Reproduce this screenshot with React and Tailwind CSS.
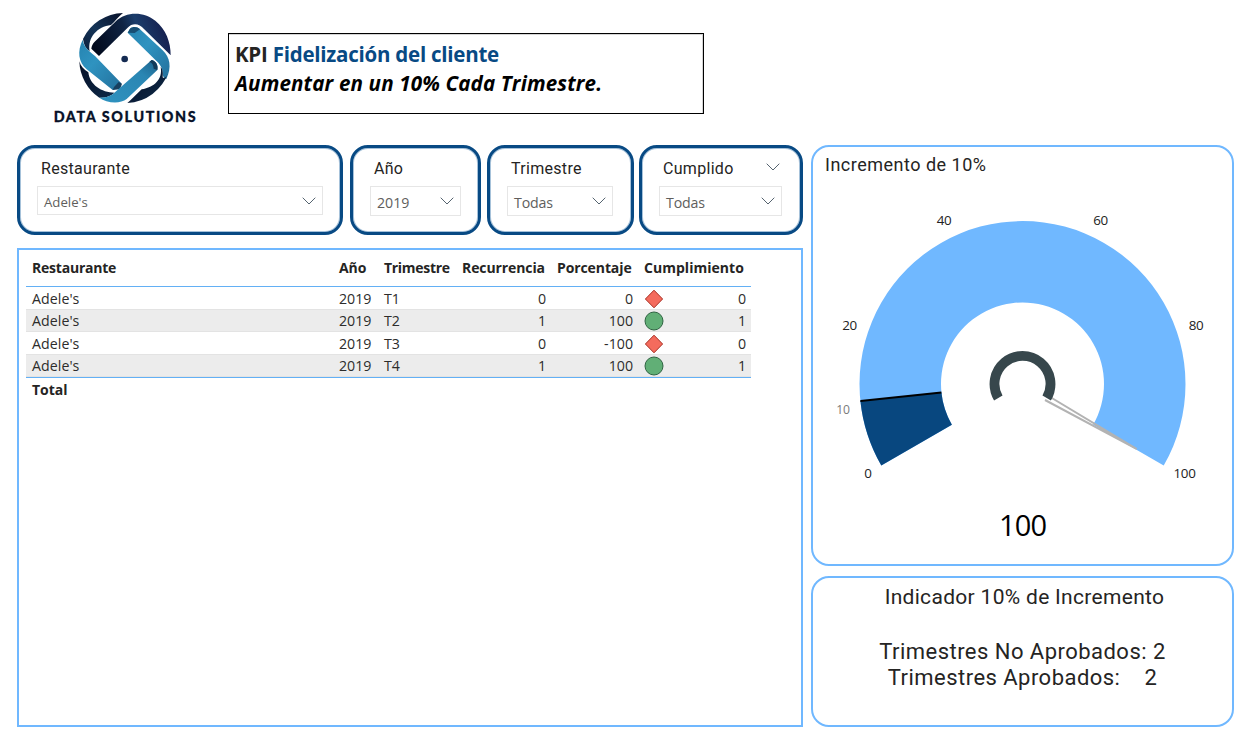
import React from "react";

const SEGOE = "font-['Open_Sans','Noto_Sans',sans-serif]";
const DIN = "font-['Roboto','Noto_Sans',sans-serif]";

function Chevron({ className = "" }) {
  return (
    <svg viewBox="0 0 14 8" fill="none" className={`h-2 w-3.5 shrink-0 ${className}`}>
      <path d="M0.7 0.7 7 7 13.3 0.7" stroke="#55636f" strokeWidth="1" />
    </svg>
  );
}

function Logo() {
  return (
    <svg viewBox="0 0 540 405" className="h-[135px] w-[180px] shrink-0">
      <defs>
        <linearGradient id="navy" x1="0" y1="1" x2="1" y2="0">
          <stop offset="0" stopColor="#0b1f3c" />
          <stop offset="0.45" stopColor="#153457" />
          <stop offset="1" stopColor="#071028" />
        </linearGradient>
        <linearGradient id="ink" x1="0" y1="0" x2="1" y2="1">
          <stop offset="0" stopColor="#050e24" />
          <stop offset="1" stopColor="#0e2b4a" />
        </linearGradient>
        <linearGradient id="navyTop" x1="0" y1="0.6" x2="1" y2="0.4">
          <stop offset="0" stopColor="#020a1c" />
          <stop offset="0.45" stopColor="#0f2444" />
          <stop offset="0.62" stopColor="#1b3d6b" />
          <stop offset="1" stopColor="#151b4a" />
        </linearGradient>
        <linearGradient id="sky" x1="0" y1="0" x2="1" y2="1">
          <stop offset="0" stopColor="#2583b0" />
          <stop offset="0.4" stopColor="#2f93c0" />
          <stop offset="1" stopColor="#23709c" />
        </linearGradient>
        <linearGradient id="skyUp" x1="0" y1="1" x2="1" y2="0">
          <stop offset="0" stopColor="#2f93c0" />
          <stop offset="0.7" stopColor="#2a86b3" />
          <stop offset="1" stopColor="#1c6089" />
        </linearGradient>
      </defs>
      <path d="M249 39A137 137 0 0 0 129 117C131 134 138 147 149 154C142 112 172 80 213 75C226 63 236 50 249 39Z" fill="url(#navy)" />
      <path d="M177 168L154 146C155 137 158 131 164 125L226 65C258 33 312 34 346 62C378 88 392 126 392 166L312 87C298 70 277 68 263 83Z" fill="url(#navyTop)" />
      <path d="M263 98L270 86C280 79 291 80 300 88L368 151C390 171 396 202 379 237C373 236 369 231 368 221C368 204 361 194 347 181Z" fill="url(#sky)" />
      <path d="M263 98L270 86C280 79 291 80 300 88L284 99Z" fill="#174e73" />
      <path d="M118 184A137 137 0 0 0 178 293C193 295 211 289 224 278C184 278 149 254 145 217C131 208 122 199 118 184Z" fill="url(#ink)" />
      <path d="M128 119C111 155 115 185 140 208L218 270L234 263L244 250L165 168C148 153 131 142 128 119Z" fill="url(#sky)" />
      <path d="M218 270L222 261L236 246L246 251L240 268Z" fill="#173f5f" />
      <path d="M178 293C200 294 216 287 229 273L335 180C349 184 355 196 352 210L260 297C240 313 199 309 178 293Z" fill="url(#skyUp)" />
      <path d="M335 180C349 184 355 196 352 210L341 206C340 196 337 188 328 186Z" fill="#123a59" />
      <path d="M262 309A137 137 0 0 0 385 217C380 231 373 238 368 232C369 221 369 208 362 201C369 238 342 262 305 268C287 285 276 297 262 309Z" fill="url(#ink)" />
      <circle cx="254" cy="177" r="10" fill="#142b52" />
      <text x="41" y="367" textLength="426" lengthAdjust="spacing" fontFamily="Lato, sans-serif" fontSize="43" fontWeight="900" fill="#081229" stroke="#081229" strokeWidth="0.8">DATA SOLUTIONS</text>
    </svg>
  );
}

function Slicer({ title, value, width, box, valueClass, header = "", trailing }) {
  return (
    <section className={`${width} h-[90px] shrink-0 rounded-[18px] border-[3px] border-[#084a84] pl-[17px] shadow-[inset_0_0_0_1px_#a6c2da]`}>
      <div className={`flex h-[38px] items-end justify-between pb-[5px] pl-1 ${header}`}>
        <h2 className={`${DIN} text-base leading-[24px] tracking-[0.3px] text-[#252423]`}>{title}</h2>
        {trailing}
      </div>
      <div className={`${box} flex items-center justify-between border border-[#e6e6e6] pl-1.5`}>
        <span className={`${SEGOE} text-[#605e5c] ${valueClass}`}>{value}</span>
        <Chevron className="mr-[6px]" />
      </div>
    </section>
  );
}

const rows = [
  { q: "T1", rec: 0, pct: 0, ok: 0, h: "h-[22px]" },
  { q: "T2", rec: 1, pct: 100, ok: 1, h: "h-[23px]" },
  { q: "T3", rec: 0, pct: -100, ok: 0, h: "h-[22px]" },
  { q: "T4", rec: 1, pct: 100, ok: 1, h: "h-[23px]" },
];
const GRID = "grid grid-cols-[307px_44px_79px_95px_87px_113px]";

function Status({ ok }) {
  return (
    <svg viewBox="0 0 20 20" className="-mt-px h-5 w-5 shrink-0">
      {ok ? (
        <circle cx="10" cy="10" r="9" fill="#61af76" stroke="#2f6442" />
      ) : (
        <path d="M10 1.2 18.6 10 10 18.8 1.4 10Z" fill="#f46b5d" stroke="#a82c20" />
      )}
    </svg>
  );
}

function Table() {
  return (
    <section className={`${SEGOE} mt-[13px] h-[479px] w-[786px] border-2 border-[#70b8ff] pl-[7px] text-[14.2px] text-[#2d2c2b]`}>
      <div className="w-[725px]">
        <div className={`${GRID} h-[37px] border-b border-[#63b0f5] pt-[7px] text-[14px] font-bold leading-[22px] tracking-[-0.1px] text-[#252423]`}>
          <span className="pl-1.5 tracking-[-0.22px]">Restaurante</span>
          <span className="pl-1.5">Año</span>
          <span className="pl-[7px] tracking-[-0.3px]">Trimestre</span>
          <span className="pl-1.5">Recurrencia</span>
          <span className="pl-1.5">Porcentaje</span>
          <span className="whitespace-nowrap pl-1.5 tracking-[0.03px]">Cumplimiento</span>
        </div>
        {rows.map((r, i) => (
          <div key={r.q} className={`${GRID} ${r.h} items-center leading-[22px] ${i % 2 ? "border-y border-y-[#e3e3e3] bg-[#ececec]" : "pt-px"}`}>
            <span className="pl-1.5 tracking-[0.05px]">Adele's</span>
            <span className="pl-1.5">2019</span>
            <span className="pl-[7px]">{r.q}</span>
            <span className="pr-[5px] text-right">{r.rec}</span>
            <span className="pr-[5px] text-right">{r.pct}</span>
            <span className="flex items-center justify-between pl-[5.5px] pr-[5px]">
              <Status ok={r.ok} />
              {r.ok}
            </span>
          </div>
        ))}
        <div className="border-t border-[#63b0f5] pl-1.5 pt-[1px] text-[14px] font-bold leading-[22px] text-[#252423]">Total</div>
      </div>
    </section>
  );
}

const ticks = [
  ["0", 868, 478], ["20", 849.5, 330], ["40", 944, 225], ["60", 1100.5, 225], ["80", 1196, 330], ["100", 1184.5, 478],
];

function Gauge() {
  return (
    <svg viewBox="813 180 419 370" className="h-[370px] w-[419px]" fontFamily="'Open Sans', 'Noto Sans', sans-serif" textAnchor="middle">
      <path d="M881.3 465.5A163 163 0 1 1 1163.7 465.5L1093.1 424.7A81.5 81.5 0 1 0 951.9 424.7Z" fill="#70b8ff" />
      <path d="M881.3 465.5A163 163 0 0 1 860.4 401L941.4 392.5A81.5 81.5 0 0 0 951.9 424.7Z" fill="#08477f" />
      <path d="M860.4 401 941.4 392.5" stroke="#000" strokeWidth="2.2" />
      <path d="M1051 397.5 1136 448.7 1045 400" fill="none" stroke="#b3b3b3" strokeWidth="2" strokeLinejoin="round" />
      <path d="M998.3 398A28 28 0 1 1 1046.7 398" fill="none" stroke="#37474c" strokeWidth="9.8" />
      {ticks.map(([t, x, y]) => (
        <text key={t} x={x} y={y} fontSize="13.4" fill="#222" letterSpacing="-0.3">{t}</text>
      ))}
      <text x="843" y="414" fontSize="12.2" fill="#7a7a7a" letterSpacing="-0.3">10</text>
      <text x="1022.6" y="535.7" fontSize="29" fill="#000" letterSpacing="-0.8">100</text>
    </svg>
  );
}

export default function App() {
  return (
    <main className="flex h-[740px] w-[1245px] gap-2 overflow-hidden bg-white pl-[17px]">
      <div className="w-[786px] shrink-0">
        <header className="flex h-[145px] pl-[23px]">
          <Logo />
          <div className={`${SEGOE} ml-2 mt-[33px] h-[81px] w-[476px] border border-black pl-1.5 pt-[6px] font-bold leading-[29px] shadow-[inset_-1px_1px_0_#d5d5d5]`}>
            <h1 className="whitespace-nowrap text-[20.5px] tracking-[-0.24px] text-[#084a84]">
              <span className="text-[#252423]">KPI</span> Fidelización del cliente
            </h1>
            <p className="whitespace-nowrap text-[20.6px] italic tracking-[0.14px] text-black">Aumentar en un 10% Cada Trimestre.</p>
          </div>
        </header>
        <div className="flex">
          <Slicer title="Restaurante" value="Adele's" width="w-[326px]" box="h-[29px] w-[286px]" valueClass="text-[13.2px] pt-1" />
          <Slicer title="Año" value="2019" width="ml-[7px] w-[131px]" box="h-[30px] w-[91px]" valueClass="text-[14.2px] pt-1" />
          <Slicer title="Trimestre" value="Todas" width="ml-[6px] w-[147px]" box="h-[30px] w-[106px]" valueClass="text-[14.2px] pt-1 tracking-[-0.15px]" />
          <Slicer title="Cumplido" value="Todas" width="ml-[5px] w-[164px]" header="w-[121px]" box="h-[30px] w-[123px]" valueClass="text-[14.2px] pt-1 tracking-[-0.15px]" trailing={<Chevron className="mb-2.5" />} />
        </div>
        <Table />
      </div>
      <div className={`${DIN} w-[423px] shrink-0 pt-[145px] text-[#252423]`}>
        <section className="h-[421px] rounded-[18px] border-2 border-[#70b8ff]">
          <h2 className="h-[33px] pl-3 pt-1.5 text-[18px] leading-6 tracking-[0.5px]">Incremento de 10%</h2>
          <Gauge />
        </section>
        <section className="mt-[10px] h-[151px] rounded-[18px] border-2 border-[#70b8ff] pt-[5px] text-center">
          <h2 className="pl-1 text-[21px] leading-7 tracking-[0.31px]">Indicador 10% de Incremento</h2>
          <div className="mt-[28px] text-[22px] leading-[26px] tracking-[0.47px]">
            <p>Trimestres No Aprobados: 2</p>
            <p>Trimestres Aprobados:<span className="ml-6">2</span></p>
          </div>
        </section>
      </div>
    </main>
  );
}
